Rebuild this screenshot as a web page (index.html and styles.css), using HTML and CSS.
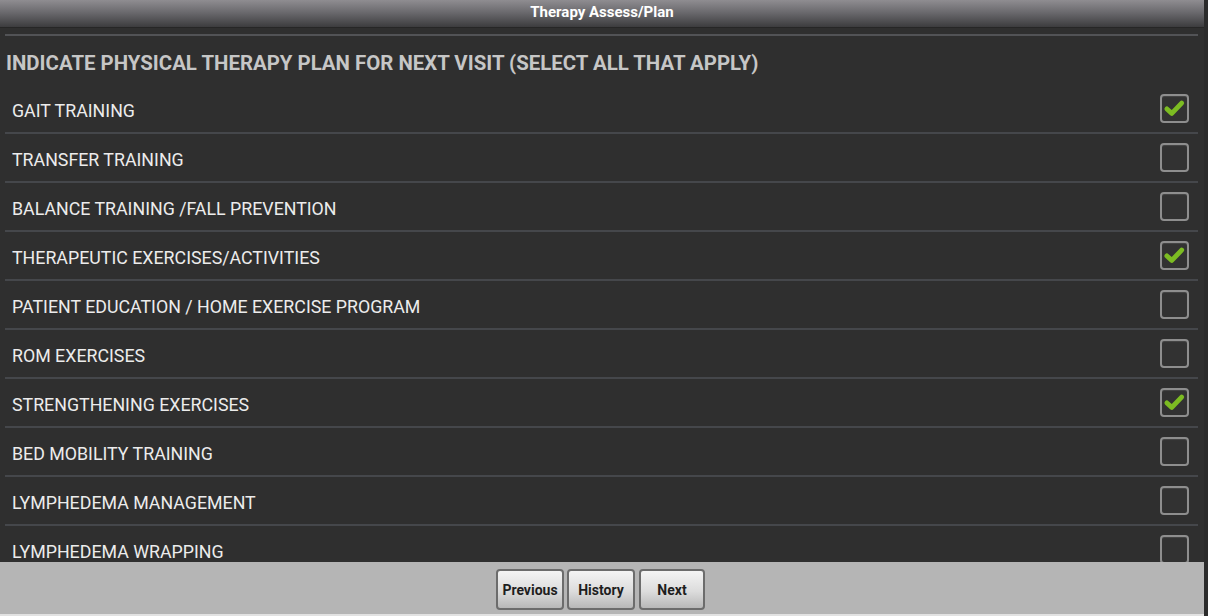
FILE: index.html
```html
<!DOCTYPE html>
<html lang="en">
<head>
  <meta charset="UTF-8">
  <title>Therapy Assess/Plan</title>
  <link rel="stylesheet" href="styles.css">
</head>
<body>
  <div class="page">
    <div class="titlebar">Therapy Assess/Plan</div>

    <div class="content">
      <h2 class="question">INDICATE PHYSICAL THERAPY PLAN FOR NEXT VISIT (SELECT ALL THAT APPLY)</h2>
      <ul class="options">
        <li class="option"><span>GAIT TRAINING</span><span class="box checked"><svg viewBox="0 0 28 28"><path d="M5.5 14.5 L11 19.5 L22 8"/></svg></span></li>
        <li class="option"><span>TRANSFER TRAINING</span><span class="box"></span></li>
        <li class="option"><span>BALANCE TRAINING /FALL PREVENTION</span><span class="box"></span></li>
        <li class="option"><span>THERAPEUTIC EXERCISES/ACTIVITIES</span><span class="box checked"><svg viewBox="0 0 28 28"><path d="M5.5 14.5 L11 19.5 L22 8"/></svg></span></li>
        <li class="option"><span>PATIENT EDUCATION / HOME EXERCISE PROGRAM</span><span class="box"></span></li>
        <li class="option"><span>ROM EXERCISES</span><span class="box"></span></li>
        <li class="option"><span>STRENGTHENING EXERCISES</span><span class="box checked"><svg viewBox="0 0 28 28"><path d="M5.5 14.5 L11 19.5 L22 8"/></svg></span></li>
        <li class="option"><span>BED MOBILITY TRAINING</span><span class="box"></span></li>
        <li class="option"><span>LYMPHEDEMA MANAGEMENT</span><span class="box"></span></li>
        <li class="option"><span>LYMPHEDEMA WRAPPING</span><span class="box"></span></li>
      </ul>
    </div>

    <div class="footer">
      <button class="nav-btn">Previous</button>
      <button class="nav-btn">History</button>
      <button class="nav-btn next">Next</button>
    </div>
  </div>
</body>
</html>
```

FILE: styles.css
```css
html, body {
  margin: 0;
  padding: 0;
  background: #2b2b2b;
  font-family: Roboto, "Liberation Sans", sans-serif;
}
.page {
  width: 1204px;
  height: 616px;
  display: flex;
  flex-direction: column;
  background: #2f2f2f;
}
.titlebar {
  height: 27px;
  line-height: 25px;
  text-align: center;
  color: #fff;
  font-size: 15px;
  font-weight: bold;
  background: linear-gradient(to bottom, #8f8d91 0%, #6b6a6e 45%, #3c3c3e 100%);
  border-bottom: 1px solid #262626;
}
.content {
  flex: 1;
  overflow: hidden;
  padding: 6px 6px 0 5px;
}
.question {
  margin: 0;
  border-top: 2px solid #525356;
  height: 49px;
  line-height: 54px;
  padding-left: 1px;
  font-size: 20.4px;
  font-weight: bold;
  color: #c6c6c6;
  white-space: nowrap;
}
.options {
  list-style: none;
  margin: 0;
  padding: 0;
}
.option {
  height: 47px;
  border-bottom: 2px solid #45474b;
  display: flex;
  align-items: center;
  justify-content: space-between;
  padding: 0 9px 0 7px;
  color: #ececec;
  font-size: 17.8px;
}
.option span:first-child {
  padding-top: 3px;
}
.box {
  width: 25px;
  height: 25px;
  border: 2px solid #8e8e8e;
  border-radius: 4px;
  background: #323232;
  box-shadow: inset 0 1px 1px rgba(255, 255, 255, 0.1);
  display: flex;
}
.box svg {
  width: 25px;
  height: 25px;
}
.box path {
  fill: none;
  stroke: #7cbc22;
  stroke-width: 5.5;
  stroke-linecap: round;
  stroke-linejoin: round;
}
.footer {
  height: 52px;
  background: #b5b5b5;
  border-bottom: 2px solid #e2e2e2;
  display: flex;
  justify-content: center;
  align-items: center;
  gap: 3px;
  padding-right: 3px;
}
.nav-btn {
  height: 41px;
  padding: 0 4px;
  width: 68px;
  border: 2px solid #6c6c6c;
  border-radius: 4px;
  background: linear-gradient(to bottom, #f4f4f4 0%, #dcdcdc 55%, #b8b8b8 100%);
  font-family: Roboto, "Liberation Sans", sans-serif;
  font-size: 14px;
  font-weight: bold;
  color: #1e1e1e;
  margin-top: 3px;
}
.nav-btn.next {
  width: 66px;
  margin-left: 1px;
}
```
